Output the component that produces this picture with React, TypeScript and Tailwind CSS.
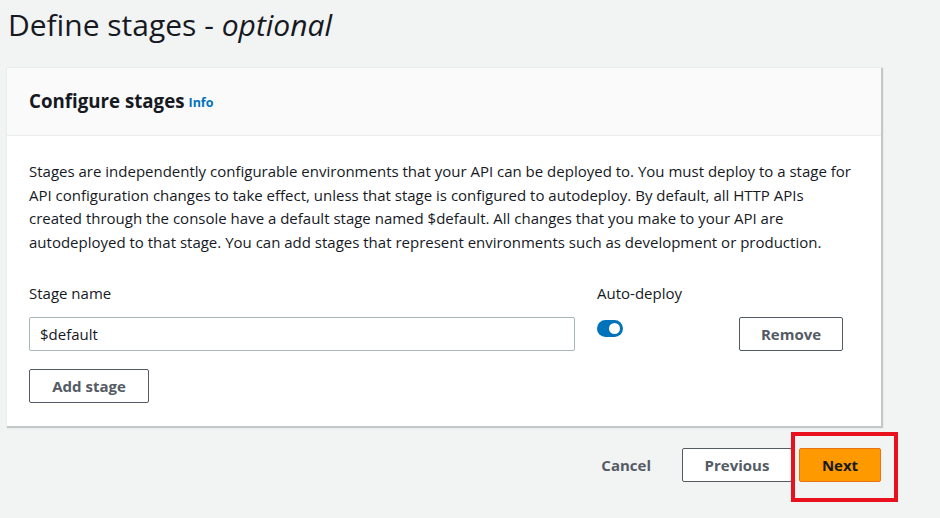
const font = { fontFamily: '"Open Sans", "Noto Sans", Arial, sans-serif' }

function Toggle() {
  return (
    <div className="w-[26px] h-[17px] rounded-full bg-[#0073bb] relative">
      <div className="absolute right-[3px] top-[3px] w-[11px] h-[11px] rounded-full bg-white" />
    </div>
  )
}

const btn = 'h-[34px] border border-[#545b64] rounded-[2px] bg-white text-[15px] font-bold text-[#545b64] flex items-center justify-center'

export default function App() {
  return (
    <div className="w-[940px] h-[518px] bg-[#f2f3f3] text-[#16191f] overflow-hidden relative" style={font}>
      <div className="pl-[7px] w-[881px]">
        <h1 className="text-[30px] leading-[36px] pt-[7px] pl-[1px] font-normal">
          Define stages - <i>optional</i>
        </h1>

        <div className="mt-[25px] bg-white shadow-[1px_1px_1px_1px_rgba(0,28,36,0.2)]">
          <div className="h-[68px] bg-[#fafafa] border-b border-[#eaeded] px-[22px] flex items-center">
            <span className="text-[18.7px] font-bold">Configure stages</span>
            <span className="ml-[4px] mt-[3px] text-[12.5px] font-bold text-[#0073bb]">Info</span>
          </div>

          <div className="px-[22px] pt-[24px] pb-[23px]">
            <p className="text-[15px] leading-[23.7px] text-[#16191f] w-[830px]">
              Stages are independently configurable environments that your API can be deployed to. You must deploy to a stage for API configuration changes to take effect, unless that stage is configured to autodeploy. By default, all HTTP APIs created through the console have a default stage named $default. All changes that you make to your API are autodeployed to that stage. You can add stages that represent environments such as development or production.
            </p>

            <div className="mt-[28px] flex">
              <div className="w-[546px]">
                <div className="text-[15px] leading-[20px]">Stage name</div>
                <div className="mt-[14px] h-[34px] border border-[#aab7b8] rounded-[2px] px-[10px] flex items-center text-[15px]">
                  $default
                </div>
              </div>
              <div className="ml-[22px] w-[142px]">
                <div className="text-[15px] leading-[20px]">Auto-deploy</div>
                <div className="mt-[17px]">
                  <Toggle />
                </div>
              </div>
              <div className="pt-[34px]">
                <div className={`${btn} w-[104px]`}>Remove</div>
              </div>
            </div>

            <div className={`${btn} w-[120px] mt-[18px]`}>Add stage</div>
          </div>
        </div>

        <div className="mt-[22px] flex items-center justify-end">
          <span className="text-[15px] font-bold text-[#545b64] mr-[31px]">Cancel</span>
          <div className={`${btn} w-[110px]`}>Previous</div>
          <div className="ml-[7px] h-[34px] w-[82px] rounded-[2px] bg-[#ff9900] border border-[#ec7211] text-[15px] font-bold text-[#16191f] flex items-center justify-center">
            Next
          </div>
        </div>
      </div>

      {/* annotation box round the Next button */}
      <div className="absolute left-[791px] top-[432px] w-[107px] h-[70px] border-[4px] border-[#e8111d]" />
    </div>
  )
}
